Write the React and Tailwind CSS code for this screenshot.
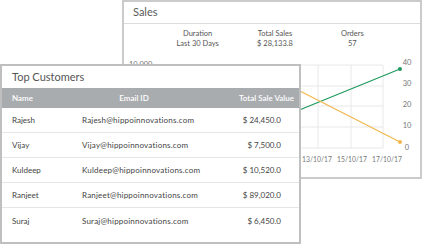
import React from "react";

const rows = [
  ["Rajesh", "Rajesh@hippoinnovations.com", "$ 24,450.0"],
  ["Vijay", "Vijay@hippoinnovations.com", "$ 7,500.0"],
  ["Kuldeep", "Kuldeep@hippoinnovations.com", "$ 10,520.0"],
  ["Ranjeet", "Ranjeet@hippoinnovations.com", "$ 89,020.0"],
  ["Suraj", "Suraj@hippoinnovations.com", "$ 6,450.0"],
];

function Chart() {
  const hy = [13, 34, 54, 75, 96];
  const vx = [32, 64, 97, 129, 162, 194, 227, 259];
  const right = ["40", "30", "20", "10", "0"];
  const ry = [11, 32, 53, 74, 96];
  const dates = [["13/10/17", 193], ["15/10/17", 228], ["17/10/17", 263]];
  return (
    <svg width="296" height="124" viewBox="0 0 296 124" className="block">
      {hy.map((y) => (
        <line key={"h" + y} x1="32" x2="259" y1={y} y2={y} stroke="#e8e8e8" strokeWidth="1" />
      ))}
      {vx.map((x) => (
        <line key={"v" + x} x1={x} x2={x} y1="13" y2="96" stroke="#e8e8e8" strokeWidth="1" />
      ))}
      <text x="5" y="13" dominantBaseline="middle" fontSize="7.5" fill="#777" fontFamily="Lato, sans-serif">10,000</text>
      {right.map((t, i) => (
        <text key={"r" + t} x="283" y={ry[i]} textAnchor="middle" dominantBaseline="middle" fontSize="7.5" fill="#777" fontFamily="Lato, sans-serif">{t}</text>
      ))}
      {dates.map(([t, x]) => (
        <text key={t} x={x} y="108" textAnchor="middle" dominantBaseline="middle" fontSize="6.8" fill="#777" fontFamily="Lato, sans-serif">{t}</text>
      ))}
      <line x1="168" y1="61" x2="276" y2="17" stroke="#1e9a5e" strokeWidth="1.2" />
      <circle cx="276" cy="17" r="2" fill="#1e9a5e" />
      <line x1="168" y1="35" x2="276" y2="90" stroke="#f2b64c" strokeWidth="1.2" />
      <circle cx="276" cy="90" r="2" fill="#f2b64c" />
    </svg>
  );
}

export default function App() {
  return (
    <div className="relative w-[422px] h-[244px] bg-white overflow-hidden" style={{ fontFamily: "Lato, 'Open Sans', sans-serif" }}>
      {/* Sales card */}
      <div className="ml-[122px] w-[300px] h-[179px] border-2 border-[#cbcbcb] bg-white flex flex-col">
        <div className="h-[22px] border-b border-[#dcdcdc] flex items-center pl-[9px] text-[11px] text-[#5a5a5a]">Sales</div>
        <div className="h-[28px] pt-[5px] pl-[35px]">
          <div className="grid grid-cols-3 w-[232px] text-[7.5px] leading-[10px] text-[#555] text-center">
            <div>
              <div>Duration</div>
              <div>Last 30 Days</div>
            </div>
            <div>
              <div>Total Sales</div>
              <div>$ 28,133.8</div>
            </div>
            <div>
              <div>Orders</div>
              <div>57</div>
            </div>
          </div>
        </div>
        <Chart />
      </div>

      {/* Top customers card overlay */}
      <div className="absolute left-0 top-[64px] w-[301px] h-[180px] border-2 border-[#bfbfbf] bg-white flex flex-col">
        <div className="h-[22px] flex items-center pl-[10px] text-[11px] text-[#555]">Top Customers</div>
        <div className="h-[20px] bg-[#a9acaf] flex items-center text-white text-[8px] font-semibold">
          <div className="w-[80px] pl-[10px]">Name</div>
          <div className="w-[104px] text-center">Email ID</div>
          <div className="flex-1 text-right pr-[5px]">Total Sale Value</div>
        </div>
        {rows.map(([n, e, v], i) => (
          <div key={n} className={"h-[25px] flex items-center text-[8px] text-[#444] " + (i < 4 ? "border-b border-[#e6e6e6]" : "")}>
            <div className="w-[80px] pl-[10px]">{n}</div>
            <div className="flex-1 tracking-[0.2px]">{e}</div>
            <div className="w-[80px] text-right pr-[18px]">{v}</div>
          </div>
        ))}
      </div>
    </div>
  );
}
